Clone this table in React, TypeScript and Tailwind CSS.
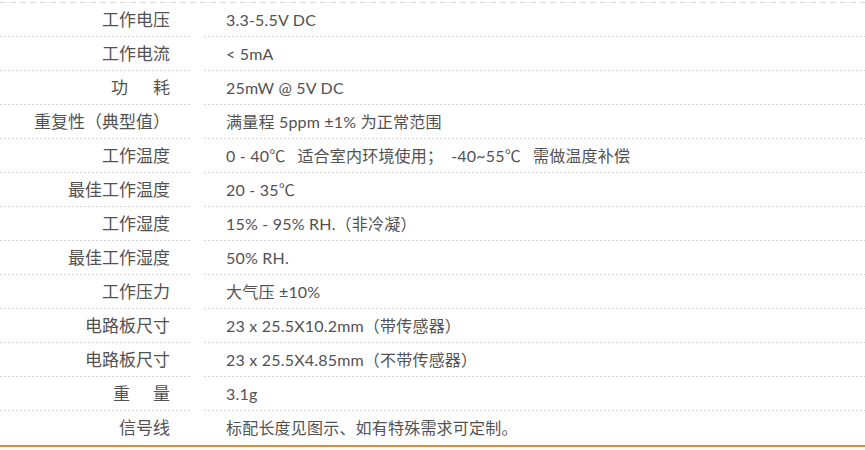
import React from 'react';

const Gap = ({ w }: { w: string }) => <span className={`inline-block ${w}`} />;

const specs: { label: React.ReactNode; value: React.ReactNode }[] = [
  { label: '工作电压', value: '3.3-5.5V DC' },
  { label: '工作电流', value: '< 5mA' },
  {
    label: (
      <>
        功<span className="inline-block w-[25px]" />耗
      </>
    ),
    value: '25mW @ 5V DC',
  },
  { label: '重复性（典型值）', value: '满量程 5ppm ±1% 为正常范围' },
  {
    label: '工作温度',
    value: (
      <>
        0 - 40℃<span className="inline-block w-[12px]" />适合室内环境使用；
        <span className="inline-block w-[8px]" />-40~55℃<span className="inline-block w-[12px]" />需做温度补偿
      </>
    ),
  },
  { label: '最佳工作温度', value: '20 - 35℃' },
  { label: '工作湿度', value: '15% - 95% RH.（非冷凝）' },
  { label: '最佳工作湿度', value: '50% RH.' },
  { label: '工作压力', value: '大气压 ±10%' },
  { label: '电路板尺寸', value: '23 x 25.5X10.2mm（带传感器）' },
  { label: '电路板尺寸', value: '23 x 25.5X4.85mm（不带传感器）' },
  {
    label: (
      <>
        重<span className="inline-block w-[23px]" />量
      </>
    ),
    value: '3.1g',
  },
  { label: '信号线', value: '标配长度见图示、如有特殊需求可定制。' },
];

const Dotted = () => (
  <div className="h-px w-full bg-[linear-gradient(to_right,#d6d6d6_50%,transparent_50%)] bg-[length:4px_1px] bg-repeat-x" />
);

export default function App() {
  return (
    <div
      className="w-[865px] h-[450px] bg-white text-[#525252] pt-[2px]"
      style={{ fontFamily: 'Lato, "Noto Sans CJK SC", sans-serif' }}
    >
      {/* top dashed rule */}
      <div className="h-px w-full bg-[linear-gradient(to_right,#dcdcdc_60%,transparent_60%)] bg-[length:10px_1px] bg-repeat-x" />

      {specs.map((row, i) => {
        const last = i === specs.length - 1;
        return (
          <div key={i} className="grid grid-cols-[192px_1fr] gap-x-[12px]">
            <div className="flex flex-col">
              <div className="h-[33px] flex items-center justify-end pr-[22px] whitespace-pre text-[17px]">
                {row.label}
              </div>
              {!last && <Dotted />}
            </div>
            <div className="flex flex-col">
              <div className="h-[33px] flex items-center pl-[22px] whitespace-pre text-[16px] tracking-[0.2px]">
                <span>{row.value}</span>
              </div>
              {!last && <Dotted />}
            </div>
          </div>
        );
      })}

      {/* bottom accent */}
      <div className="h-[2px] w-full bg-[#e8872c] mt-[1px]" />
    </div>
  );
}
